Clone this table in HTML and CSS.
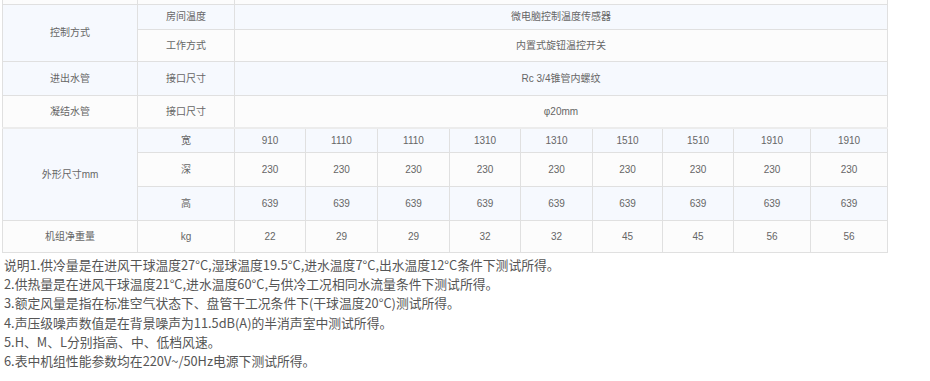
FILE: index.html
```html
<!DOCTYPE html>
<html lang="zh-CN">
<head>
<meta charset="utf-8">
<title>参数表</title>
<link rel="stylesheet" href="styles.css">
</head>
<body>
<div class="page">
  <table class="spec">
    <colgroup>
      <col class="c-name"><col class="c-sub">
      <col class="c71"><col class="c72"><col class="c72"><col class="c71"><col class="c72"><col class="c70"><col class="c71"><col class="c77"><col class="c77">
    </colgroup>
    <tbody>
      <tr class="w h0"><td></td><td></td><td colspan="9"></td></tr>
      <tr class="b h25"><td rowspan="2" class="b">控制方式</td><td>房间温度</td><td colspan="9">微电脑控制温度传感器</td></tr>
      <tr class="w h32"><td>工作方式</td><td colspan="9">内置式旋钮温控开关</td></tr>
      <tr class="b h34"><td>进出水管</td><td>接口尺寸</td><td colspan="9">Rc 3/4锥管内螺纹</td></tr>
      <tr class="w h32"><td>凝结水管</td><td>接口尺寸</td><td colspan="9">φ20mm</td></tr>
      <tr class="b h24 thick"><td rowspan="3" class="b">外形尺寸mm</td><td>宽</td><td>910</td><td>1110</td><td>1110</td><td>1310</td><td>1310</td><td>1510</td><td>1510</td><td>1910</td><td>1910</td></tr>
      <tr class="w h34"><td>深</td><td>230</td><td>230</td><td>230</td><td>230</td><td>230</td><td>230</td><td>230</td><td>230</td><td>230</td></tr>
      <tr class="b h34"><td>高</td><td>639</td><td>639</td><td>639</td><td>639</td><td>639</td><td>639</td><td>639</td><td>639</td><td>639</td></tr>
      <tr class="w h32"><td>机组净重量</td><td>kg</td><td>22</td><td>29</td><td>29</td><td>32</td><td>32</td><td>45</td><td>45</td><td>56</td><td>56</td></tr>
    </tbody>
  </table>
  <div class="notes">
    <p>说明1.供冷量是在进风干球温度27°C,湿球温度19.5°C,进水温度7°C,出水温度12°C条件下测试所得。</p>
    <p>2.供热量是在进风干球温度21°C,进水温度60°C,与供冷工况相同水流量条件下测试所得。</p>
    <p>3.额定风量是指在标准空气状态下、盘管干工况条件下(干球温度20°C)测试所得。</p>
    <p>4.声压级噪声数值是在背景噪声为11.5dB(A)的半消声室中测试所得。</p>
    <p>5.H、M、L分别指高、中、低档风速。</p>
    <p>6.表中机组性能参数均在220V~/50Hz电源下测试所得。</p>
  </div>
</div>
</body>
</html>
```

FILE: styles.css
```css
html, body {
  margin: 0;
  padding: 0;
  background: #ffffff;
}

.page {
  padding-left: 2px;
}

.spec {
  width: 886px;
  table-layout: fixed;
  border-collapse: collapse;
  font-family: "Liberation Sans", "Noto Sans CJK SC", sans-serif;
  font-size: 10px;
  color: #666666;
  border-right: 1px solid #dcdcdc;
  border-left: 1px solid #e6e6e6;
}

.c-name { width: 135px; }
.c-sub { width: 97px; }
.c70 { width: 70px; }
.c71 { width: 71px; }
.c72 { width: 72px; }
.c77 { width: 77px; }

.spec td {
  border: 1px solid #e0e0e0;
  text-align: center;
  vertical-align: middle;
  padding: 0;
  line-height: 12px;
}

.spec tr.w td { background: #fcfcfc; }
.spec tr.b td { background: #f6f9fe; }
.spec td.b { background: #f6f9fe; }

.spec tr.h0 td { height: 4px; border-top: 0; }
.spec tr.h24 td { height: 23px; }
.spec tr.h25 td { height: 24px; }
.spec tr.h32 td { height: 31px; }
.spec tr.h34 td { height: 33px; }

.spec tr.thick td { border-top: 2px solid #ececec; }

.notes {
  margin-top: 2px;
  padding-left: 2px;
  font-family: "Noto Sans CJK SC", "Noto Sans", sans-serif;
  font-size: 12.8px;
  line-height: 19.2px;
  color: #555555;
}

.notes p {
  margin: 0;
}
```
